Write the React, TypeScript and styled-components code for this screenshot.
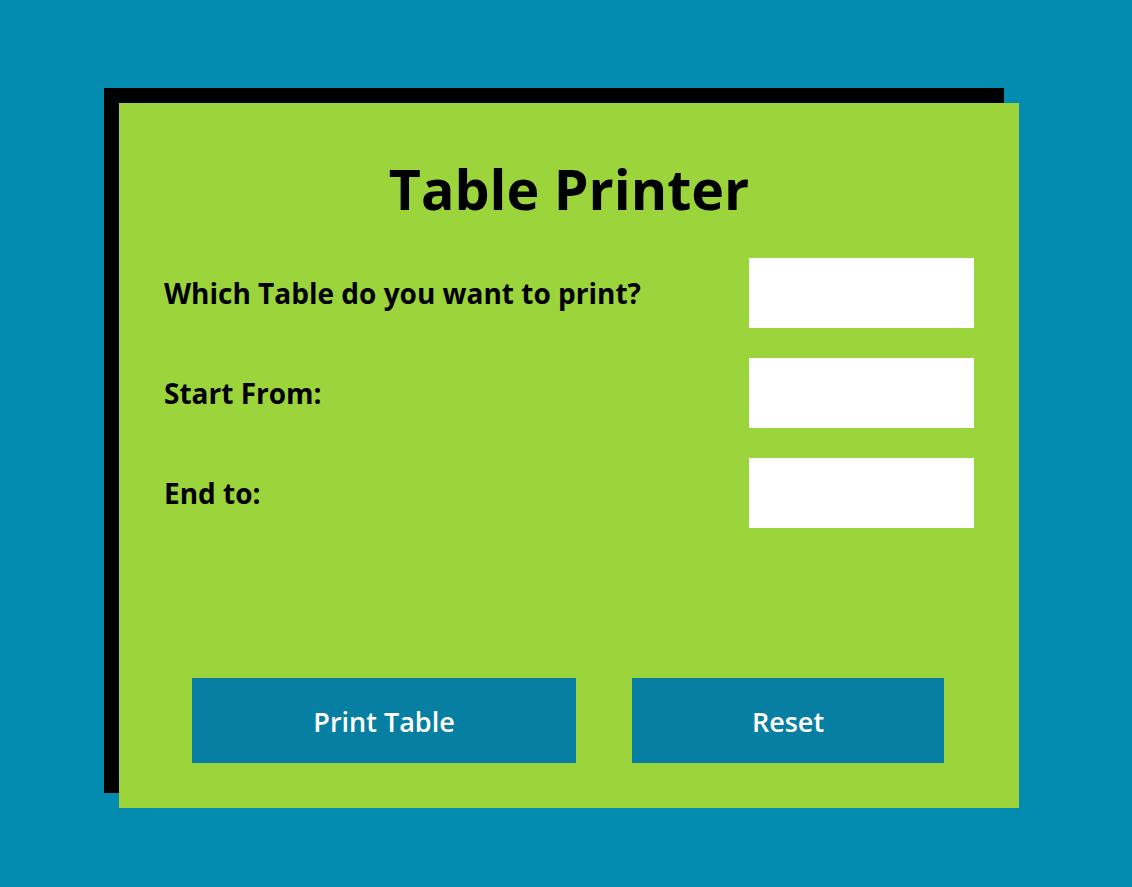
import React from "react";
import styled, { createGlobalStyle } from "styled-components";

const Global = createGlobalStyle`
  html, body {
    margin: 0;
    padding: 0;
    background: #038cb0;
    font-family: "Open Sans", "Noto Sans", Arial, sans-serif;
  }
  * { box-sizing: border-box; }
`;

const Page = styled.div`
  width: 1132px;
  height: 887px;
  padding: 103px 0 0 119px;
  background: #038cb0;
`;

const Card = styled.form`
  width: 900px;
  height: 705px;
  background: #9bd43b;
  box-shadow: -15px -15px 0 0 #000;
  padding: 46px 45px 0 45px;
  display: flex;
  flex-direction: column;
`;

const Title = styled.h1`
  margin: 0 0 29px 0;
  text-align: center;
  font-size: 55.5px;
  line-height: 80px;
  font-weight: 700;
  color: #000;
`;

const Rows = styled.div`
  display: flex;
  flex-direction: column;
  gap: 30px;
`;

const Row = styled.label`
  display: flex;
  align-items: center;
  justify-content: space-between;
  height: 70px;
`;

const LabelText = styled.span`
  font-size: 28px;
  font-weight: 700;
  color: #000;
`;

const Input = styled.input`
  width: 225px;
  height: 70px;
  border: none;
  outline: none;
  background: #fff;
  margin: 0;
  padding: 0 10px;
  font-size: 24px;
`;

const Buttons = styled.div`
  display: flex;
  justify-content: center;
  gap: 56px;
  margin-top: 150px;
  padding-right: 2px;
`;

const Button = styled.button<{ $w: number }>`
  width: ${(p) => p.$w}px;
  height: 85px;
  border: none;
  background: #067fa3;
  color: #fff;
  font-family: "Open Sans", "Noto Sans", Arial, sans-serif;
  font-size: 27px;
  font-weight: 600;
  cursor: pointer;
  padding: 2px 0 0 0;
`;

export default function App() {
  return (
    <>
      <Global />
      <Page>
        <Card onSubmit={(e) => e.preventDefault()}>
          <Title>Table Printer</Title>
          <Rows>
            <Row>
              <LabelText>Which Table do you want to print?</LabelText>
              <Input type="text" />
            </Row>
            <Row>
              <LabelText>Start From:</LabelText>
              <Input type="text" />
            </Row>
            <Row>
              <LabelText>End to:</LabelText>
              <Input type="text" />
            </Row>
          </Rows>
          <Buttons>
            <Button type="button" $w={384}>Print Table</Button>
            <Button type="button" $w={312}>Reset</Button>
          </Buttons>
        </Card>
      </Page>
    </>
  );
}
